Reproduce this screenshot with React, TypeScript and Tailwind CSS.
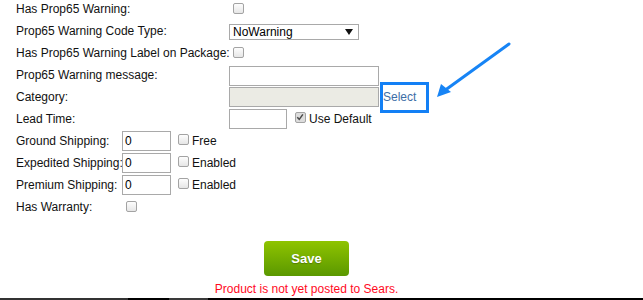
import React from "react";

function Checkbox({ checked = false, className = "" }: { checked?: boolean; className?: string }) {
  return (
    <span
      className={`relative inline-block h-[11px] w-[11px] shrink-0 rounded-[2px] border border-[#a3a3a3] ${
        checked ? "bg-[#dcdcdc]" : "bg-gradient-to-b from-[#fdfdfd] to-[#e6e6e6]"
      } ${className}`}
    >
      {checked && (
        <svg viewBox="0 0 11 11" className="absolute left-0 top-0 h-[9px] w-[9px]">
          <path d="M1.5 5.2 L4 7.8 L8.4 1.6" fill="none" stroke="#4a4a4a" strokeWidth="1.8" />
        </svg>
      )}
    </span>
  );
}

function TextBox({ value = "", className = "" }: { value?: string; className?: string }) {
  return (
    <div
      className={`flex h-[20px] shrink-0 items-center border border-[#a9a9a9] bg-white pl-[2px] text-[12px] text-black ${className}`}
    >
      {value}
    </div>
  );
}

export default function App() {
  return (
    <div
      className="relative flex h-[300px] w-[643px] flex-col overflow-hidden bg-white text-[12px] text-[#111]"
      style={{ fontFamily: '"Liberation Sans", Arial, sans-serif' }}
    >
      <div className="-mt-[2px] flex flex-col pl-[16px]">
        {/* top group: wide label column */}
        <div className="flex h-[22px] items-center">
          <span className="w-[213px] shrink-0">Has Prop65 Warning:</span>
          <Checkbox className="ml-[4px] -mt-[2px]" />
        </div>
        <div className="flex h-[22px] items-center">
          <span className="w-[213px] shrink-0">Prop65 Warning Code Type:</span>
          <div className="mt-[2px] flex h-[16px] w-[130px] items-center justify-between border border-[#a9a9a9] pl-[3px] pr-[5px] text-black">
            <span>NoWarning</span>
            <svg viewBox="0 0 8 6" className="h-[6px] w-[8px]">
              <path d="M0 0 H8 L4 6 Z" fill="#111" />
            </svg>
          </div>
        </div>
        <div className="flex h-[22px] items-center">
          <span className="w-[213px] shrink-0 whitespace-nowrap">Has Prop65 Warning Label on Package:</span>
          <Checkbox className="ml-[4px] -mt-[2px]" />
        </div>
        <div className="flex h-[22px] items-center">
          <span className="w-[213px] shrink-0">Prop65 Warning message:</span>
          <TextBox className="mt-px w-[150px]" />
        </div>
        <div className="flex h-[22px] items-center">
          <span className="w-[213px] shrink-0">Category:</span>
          <div className="h-[20px] w-[150px] shrink-0 border border-[#a9a9a9] bg-[#ebebe4]" />
          <div className="ml-px flex h-[31px] w-[49px] shrink-0 items-center border-[3px] border-[#1380f5] pb-[1px] text-[#3d6ea6]">
            Select
          </div>
        </div>
        <div className="flex h-[22px] items-center">
          <span className="w-[213px] shrink-0">Lead Time:</span>
          <TextBox className="w-[58px]" />
          <Checkbox checked className="ml-[8px] -mt-[3px]" />
          <span className="ml-[3px]">Use Default</span>
        </div>

        {/* shipping group: narrow label column */}
        <div className="flex h-[22px] items-center">
          <span className="w-[106px] shrink-0 whitespace-nowrap">Ground Shipping:</span>
          <TextBox value="0" className="w-[49px]" />
          <Checkbox className="ml-[7px] -mt-[3px]" />
          <span className="ml-[3px]">Free</span>
        </div>
        <div className="flex h-[22px] items-center">
          <span className="w-[106px] shrink-0 whitespace-nowrap">Expedited Shipping:</span>
          <TextBox value="0" className="w-[49px]" />
          <Checkbox className="ml-[7px] -mt-[3px]" />
          <span className="ml-[3px]">Enabled</span>
        </div>
        <div className="flex h-[22px] items-center">
          <span className="w-[106px] shrink-0 whitespace-nowrap">Premium Shipping:</span>
          <TextBox value="0" className="w-[49px]" />
          <Checkbox className="ml-[7px] -mt-[3px]" />
          <span className="ml-[3px]">Enabled</span>
        </div>
        <div className="flex h-[22px] items-center">
          <span className="w-[106px] shrink-0 whitespace-nowrap">Has Warranty:</span>
          <Checkbox className="ml-[4px] -mt-px" />
        </div>
      </div>

      <div className="mt-[23px] flex w-[613px] flex-col items-center">
        <button className="h-[35px] w-[85px] rounded-[4px] bg-gradient-to-b from-[#8fc400] to-[#5a9800] text-[13px] font-bold text-white [text-shadow:0_1px_1px_rgba(0,0,0,0.25)]">
          Save
        </button>
        <p className="mt-[4px] text-[12px] text-[#ff0a1e]">Product is not yet posted to Sears.</p>
      </div>

      <div className="mt-auto flex h-[2px] w-full">
        <div className="w-[128px] bg-[#333]" />
        <div className="w-[41px] bg-black" />
        <div className="w-[39px] bg-[#3a3a3a]" />
        <div className="flex-1 bg-black" />
      </div>

      {/* annotation arrow */}
      <svg className="pointer-events-none absolute left-0 top-0" width="643" height="300">
        <line x1="509" y1="44" x2="444" y2="91" stroke="#1784f5" strokeWidth="3" strokeLinecap="round" />
        <path d="M437 97 L441 84 L451 92 Z" fill="#1784f5" />
      </svg>
    </div>
  );
}
